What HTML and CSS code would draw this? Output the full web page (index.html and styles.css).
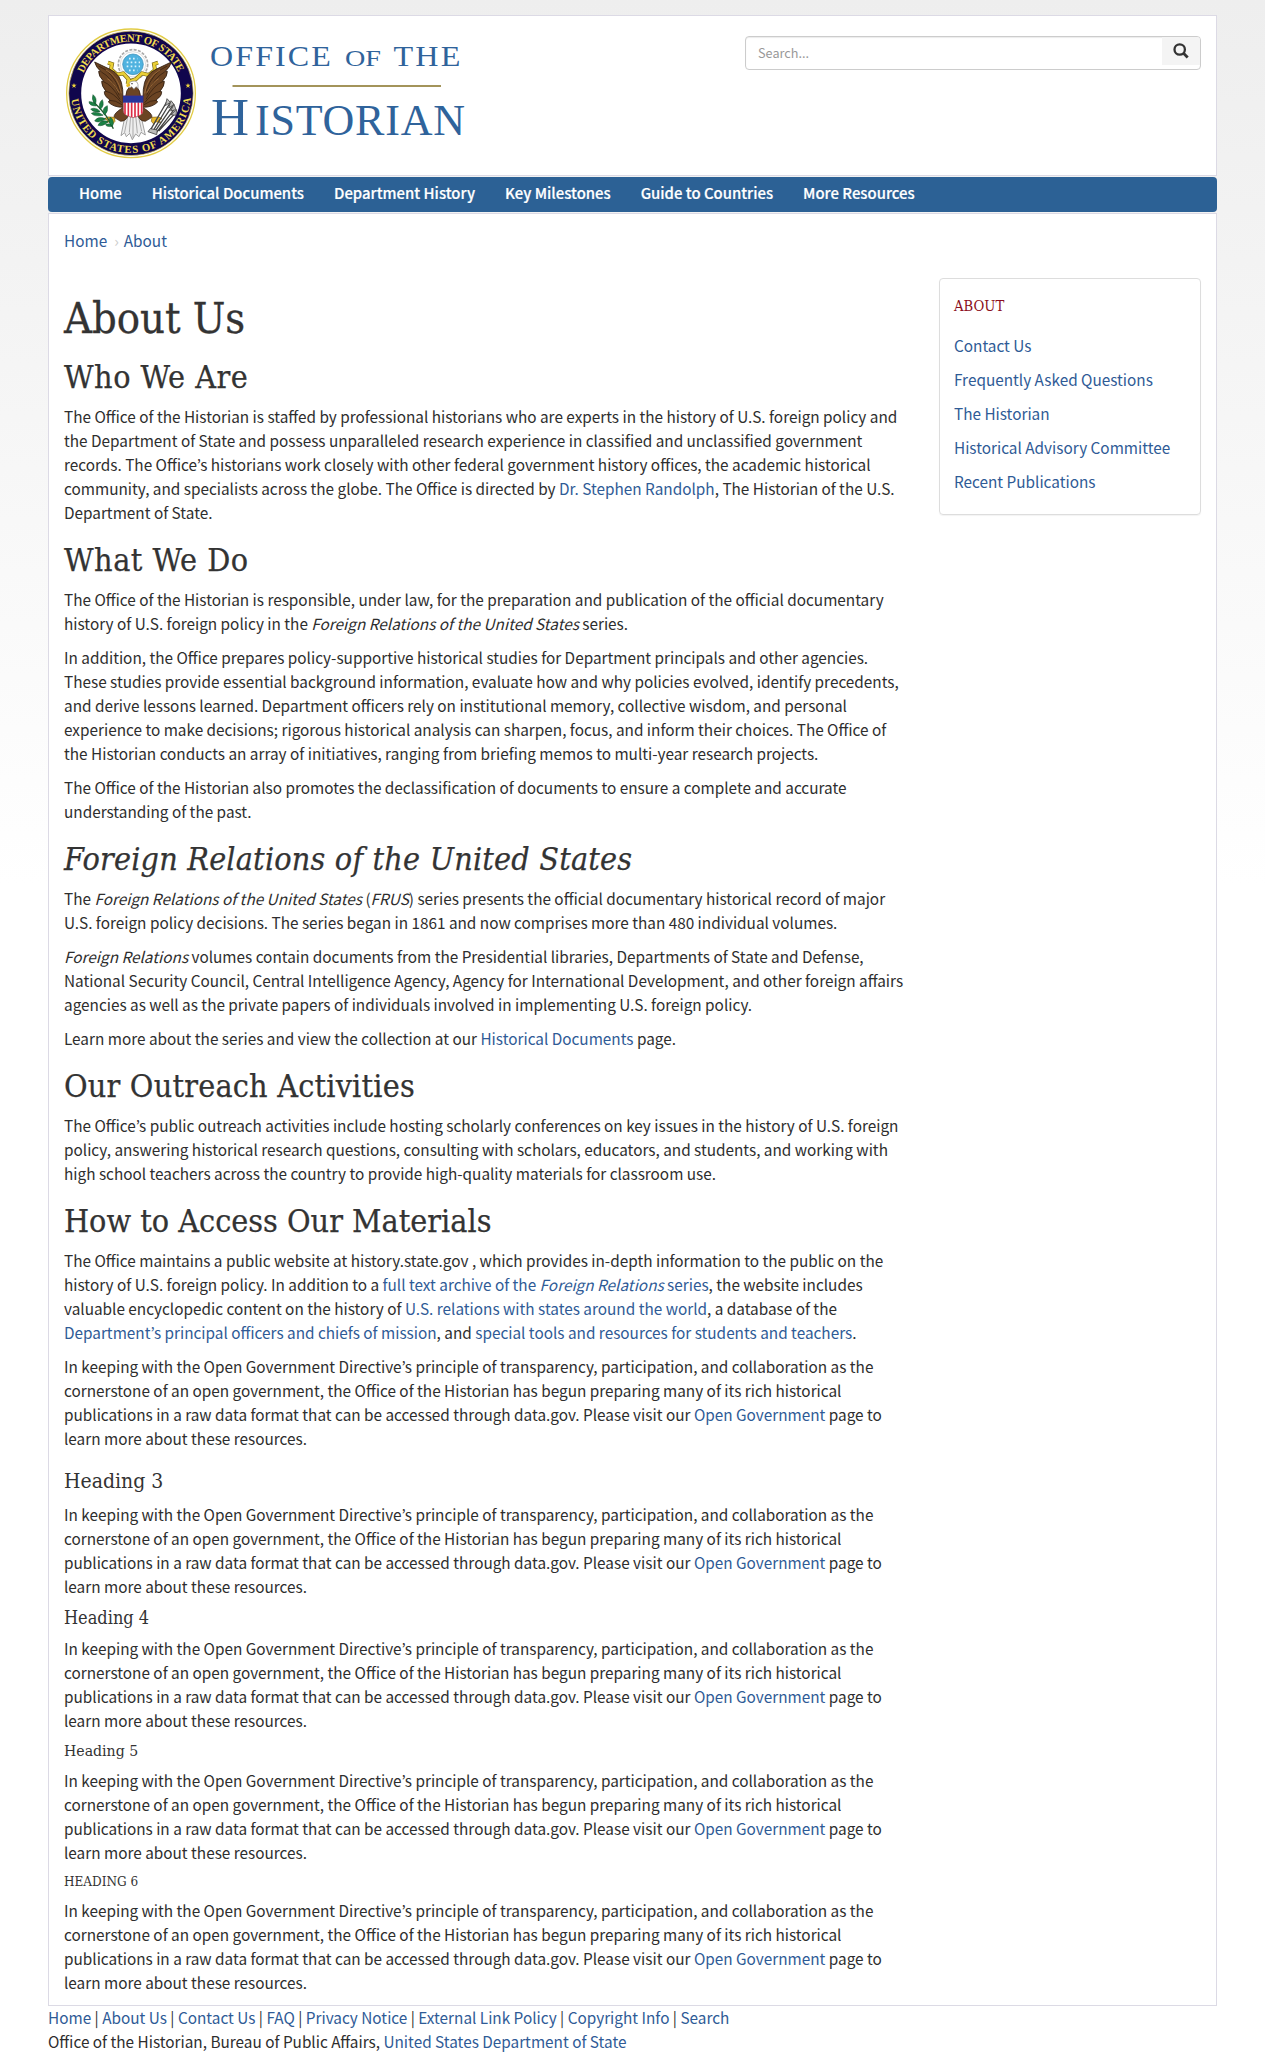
FILE: index.html
```html
<!DOCTYPE html>
<html lang="en">
<head>
<meta charset="utf-8">
<title>About Us - Office of the Historian</title>
<link rel="stylesheet" href="styles.css">
</head>
<body>
<div class="page">
  <header class="masthead">
    <a class="brand" href="#" aria-label="Office of the Historian">
      <svg class="logo" viewBox="60 20 410 145" width="410" height="145">
        <defs>
          <path id="arc-top" d="M70 160A155 155 0 0 1 356 160"/>
          <path id="arc-bottom" d="M34 238A180 180 0 0 0 392 238"/>
          <g id="wing">
            <path d="M104 126L150 148Q184 162 188 208L190 262Q160 262 145 246L150 240Q132 228 133 215L138 214Q124 198 125 184L131 184Q115 168 116 154L122 154Q108 142 104 126Z" fill="#6b4423" stroke="#2d1b0d" stroke-width="2.5"/>
            <path d="M116 138Q160 156 180 214M124 156Q156 172 178 226M130 185Q156 194 180 238M138 214Q160 218 184 248M148 241Q166 240 186 254" fill="none" stroke="#2d1b0d" stroke-width="2"/>
            <path d="M138 150Q176 170 184 220M142 176Q160 186 177 218" fill="none" stroke="#a2703c" stroke-width="2.5"/>
          </g>
          <polygon id="star" points="0,-8 2,-2.500 8,-2.500 3,1 5,7 0,3.500 -5,7 -3,1 -8,-2.500 -2,-2.500"/>
        </defs>
        <g transform="translate(60 20) scale(.33333)">
          <circle cx="213" cy="220" r="193" fill="#fff" stroke="#e2cc45" stroke-width="4"/>
          <circle cx="213" cy="220" r="168" fill="#fff" stroke="#10064d" stroke-width="37"/>
          <circle cx="213" cy="220" r="187" fill="none" stroke="#d9c766" stroke-width="2"/>
          <text class="seal-text"><textPath href="#arc-top" textLength="361">DEPARTMENT OF STATE</textPath></text>
          <text class="seal-text"><textPath href="#arc-bottom" textLength="532">UNITED STATES OF AMERICA</textPath></text>
          <use href="#star" x="42" y="197" fill="#ecd23b"/>
          <use href="#star" x="384" y="197" fill="#ecd23b"/>
          <circle cx="219" cy="133" r="44" fill="#fff" stroke="#aaa" stroke-width="5" stroke-dasharray="9 4"/>
          <circle cx="219" cy="133" r="38" fill="none" stroke="#ccc" stroke-width="2"/>
          <circle cx="219" cy="133" r="31" fill="#4fb2df" stroke="#3489b4" stroke-width="2"/>
          <path d="M207 116h25M200 127h40M200 139h40M207 151h25" stroke="#d9f4ff" stroke-width="5" stroke-dasharray="5 7"/>
          <path d="M144 128l12 4-3 16 18 16 19-4 16 18-3 14M294 128l-12 4 3 18-19 15-20-5-18 17-20 8" fill="none" stroke="#756312" stroke-width="12"/>
          <path d="M144 128l12 4-3 16 18 16 19-4 16 18-3 14M294 128l-12 4 3 18-19 15-20-5-18 17-20 8" fill="none" stroke="#e9cf36" stroke-width="8"/>
          <use href="#wing"/>
          <use href="#wing" transform="translate(438 0) scale(-1 1)"/>
          <path d="M196 284L183 347L194 338L199 350L209 340L217 359L227 342L237 350L243 337L256 345L242 284Z" fill="#eee" stroke="#777" stroke-width="2"/>
          <path d="M204 286l-10 50M212 286l-4 52M219 286v67M227 286l5 54M235 286l10 48" stroke="#888" stroke-width="2"/>
          <path d="M190 262Q160 280 162 292L182 304Q200 304 207 281M248 262Q278 280 276 292L256 304Q238 304 231 281" fill="#6b4423" stroke="#2d1b0d" stroke-width="2"/>
          <path d="M197 229Q198 210 210 199L229 199Q240 210 242 229Z" fill="#6b4423" stroke="#2d1b0d" stroke-width="2"/>
          <path d="M208 204Q202 187 216 184Q237 178 234 205L228 200L222 208L215 200Z" fill="#fff" stroke="#888" stroke-width="2"/>
          <path d="M209 190l-11 4 3 8 10-5z" fill="#e6b91e"/><circle cx="216" cy="191" r="2"/>
          <path d="M190 228h59v45q0 14-30 20q-29-6-29-20z" fill="#fff" stroke="#963b49" stroke-width="2"/>
          <path d="M195 247v36M205 247v41M215 247v44M225 247v44M235 247v41M245 247v34" stroke="#dd2b45" stroke-width="5"/>
          <path d="M189 227h61v21h-61z" fill="#28349b"/>
          <path d="M163 292l-20-1-10 5 10 4-7 8 16-3 5 8 8-9zM276 292l20-1 10 5-10 4 7 8-16-3-5 8-8-9z" fill="#e8b92a" stroke="#84600d" stroke-width="2"/>
          <path d="M160 326Q143 285 101 246" fill="none" stroke="#245c32" stroke-width="4"/>
          <g fill="#1b8145" stroke="#124c2a" stroke-width="1.500">
            <path d="M104 250q-11-11-5-26 13 10 8 27zM109 258q-22 0-22-13 15-1 23 11zM119 267q-4-19 8-28 8 17-6 29zM120 275q-21 3-28-8 16-7 28 7zM132 284q-8-20 10-27 4 17-8 28zM129 286q-26 5-35-6 16-9 35 5zM137 297q-19 14-33 6 9-16 33-7zM145 305q-17 16-31 11 8-18 31-12zM155 318q-13-13-4-27 15 12 6 28zM156 319q-18 3-19-6 12-5 20 5z"/>
          </g>
          <path d="M278 335L330 249M283 337L338 257M289 338L343 268M272 329L320 246M296 333L345 280" stroke="#444" stroke-width="4"/>
          <path d="M316 257l5-21 10 11zM326 264l7-22 9 11zM332 273l10-20 6 16zM333 284l17-15-2 17zM271 326l-7 9 26 9 2-14z" fill="#bbb" stroke="#444" stroke-width="2.500"/>
        </g>
        <g class="wordmark">
          <text x="210" y="65.500" font-size="30" textLength="123" lengthAdjust="spacingAndGlyphs" letter-spacing="2">OFFICE</text>
          <text x="345" y="65.500" font-size="24" textLength="36" lengthAdjust="spacingAndGlyphs">OF</text>
          <text x="393.500" y="65.500" font-size="30" textLength="69" lengthAdjust="spacingAndGlyphs" letter-spacing="2">THE</text>
          <text x="211" y="134.500" font-size="52" textLength="38" lengthAdjust="spacingAndGlyphs">H</text>
          <text x="255" y="134.500" font-size="44" textLength="210">ISTORIAN</text>
        </g>
        <path d="M232.500 86H441" stroke="#a3945a" stroke-width="2"/>
      </svg>
    </a>
    <form class="search">
      <input class="search-input" type="text" placeholder="Search...">
      <button class="search-button" type="button" aria-label="Search">
        <svg width="16" height="16" viewBox="0 0 16 16"><circle cx="6.700" cy="6.500" r="5.200" fill="none" stroke="#333" stroke-width="2.300"/><path d="M10.500 10.300l4.200 4.200" stroke="#333" stroke-width="2.800"/></svg>
      </button>
    </form>
  </header>
  <nav class="navbar">
    <a href="#">Home</a>
    <a href="#">Historical Documents</a>
    <a href="#">Department History</a>
    <a href="#">Key Milestones</a>
    <a href="#">Guide to Countries</a>
    <a href="#">More Resources</a>
  </nav>
  <div class="content">
    <div class="breadcrumb"><a href="#">Home</a><span class="sep">›</span><a href="#">About</a></div>
    <div class="columns">
      <main class="article">
        <h1>About Us</h1>
        <h2 class="spaced">Who We Are</h2>
        <p>The Office of the Historian is staffed by professional historians who are experts in the history of U.S. foreign policy and<br>the Department of State and possess unparalleled research experience in classified and unclassified government<br>records. The Office’s historians work closely with other federal government history offices, the academic historical<br>community, and specialists across the globe. The Office is directed by <a href="#">Dr. Stephen Randolph</a>, The Historian of the U.S.<br>Department of State.</p>
        <h2 class="spaced">What We Do</h2>
        <p>The Office of the Historian is responsible, under law, for the preparation and publication of the official documentary<br>history of U.S. foreign policy in the <em>Foreign Relations of the United States</em> series.</p>
        <p>In addition, the Office prepares policy-supportive historical studies for Department principals and other agencies.<br>These studies provide essential background information, evaluate how and why policies evolved, identify precedents,<br>and derive lessons learned. Department officers rely on institutional memory, collective wisdom, and personal<br>experience to make decisions; rigorous historical analysis can sharpen, focus, and inform their choices. The Office of<br>the Historian conducts an array of initiatives, ranging from briefing memos to multi-year research projects.</p>
        <p>The Office of the Historian also promotes the declassification of documents to ensure a complete and accurate<br>understanding of the past.</p>
        <h2><em>Foreign Relations of the United States</em></h2>
        <p>The <em>Foreign Relations of the United States</em> (<em>FRUS</em>) series presents the official documentary historical record of major<br>U.S. foreign policy decisions. The series began in 1861 and now comprises more than 480 individual volumes.</p>
        <p><em>Foreign Relations</em> volumes contain documents from the Presidential libraries, Departments of State and Defense,<br>National Security Council, Central Intelligence Agency, Agency for International Development, and other foreign affairs<br>agencies as well as the private papers of individuals involved in implementing U.S. foreign policy.</p>
        <p>Learn more about the series and view the collection at our <a href="#">Historical Documents</a> page.</p>
        <h2>Our Outreach Activities</h2>
        <p>The Office’s public outreach activities include hosting scholarly conferences on key issues in the history of U.S. foreign<br>policy, answering historical research questions, consulting with scholars, educators, and students, and working with<br>high school teachers across the country to provide high-quality materials for classroom use.</p>
        <h2 class="tight">How to Access Our Materials</h2>
        <p>The Office maintains a public website at history.state.gov , which provides in-depth information to the public on the<br>history of U.S. foreign policy. In addition to a <a href="#">full text archive of the <em>Foreign Relations</em> series</a>, the website includes<br>valuable encyclopedic content on the history of <a href="#">U.S. relations with states around the world</a>, a database of the<br><a href="#">Department’s principal officers and chiefs of mission</a>, and <a href="#">special tools and resources for students and teachers</a>.</p>
        <p>In keeping with the Open Government Directive’s principle of transparency, participation, and collaboration as the<br>cornerstone of an open government, the Office of the Historian has begun preparing many of its rich historical<br>publications in a raw data format that can be accessed through data.gov. Please visit our <a href="#">Open Government</a> page to<br>learn more about these resources.</p>
        <h3>Heading 3</h3>
        <p>In keeping with the Open Government Directive’s principle of transparency, participation, and collaboration as the<br>cornerstone of an open government, the Office of the Historian has begun preparing many of its rich historical<br>publications in a raw data format that can be accessed through data.gov. Please visit our <a href="#">Open Government</a> page to<br>learn more about these resources.</p>
        <h4>Heading 4</h4>
        <p>In keeping with the Open Government Directive’s principle of transparency, participation, and collaboration as the<br>cornerstone of an open government, the Office of the Historian has begun preparing many of its rich historical<br>publications in a raw data format that can be accessed through data.gov. Please visit our <a href="#">Open Government</a> page to<br>learn more about these resources.</p>
        <h5>Heading 5</h5>
        <p>In keeping with the Open Government Directive’s principle of transparency, participation, and collaboration as the<br>cornerstone of an open government, the Office of the Historian has begun preparing many of its rich historical<br>publications in a raw data format that can be accessed through data.gov. Please visit our <a href="#">Open Government</a> page to<br>learn more about these resources.</p>
        <h6>Heading 6</h6>
        <p>In keeping with the Open Government Directive’s principle of transparency, participation, and collaboration as the<br>cornerstone of an open government, the Office of the Historian has begun preparing many of its rich historical<br>publications in a raw data format that can be accessed through data.gov. Please visit our <a href="#">Open Government</a> page to<br>learn more about these resources.</p>
      </main>
      <aside class="panel">
        <h2 class="panel-title">About</h2>
        <ul>
          <li><a href="#">Contact Us</a></li>
          <li><a href="#">Frequently Asked Questions</a></li>
          <li><a href="#">The Historian</a></li>
          <li><a href="#">Historical Advisory Committee</a></li>
          <li><a href="#">Recent Publications</a></li>
        </ul>
      </aside>
    </div>
  </div>
  <footer class="footer">
    <div><a href="#">Home</a> | <a href="#">About Us</a> | <a href="#">Contact Us</a> | <a href="#">FAQ</a> | <a href="#">Privacy Notice</a> | <a href="#">External Link Policy</a> | <a href="#">Copyright Info</a> | <a href="#">Search</a></div>
    <div>Office of the Historian, Bureau of Public Affairs, <a href="#">United States Department of State</a></div>
  </footer>
</div>
</body>
</html>
```
FILE: styles.css
```css
* { box-sizing: border-box; }
body {
  margin: 0;
  height: 2069px;
  overflow: hidden;
  background: #fff linear-gradient(#eee, #fff) no-repeat 0 0 / 100% 885px;
  color: #2e2e2e;
  font: 15.33px/24px "Noto Sans CJK KR", "Noto Sans", sans-serif;
}
a { color: #2f5b96; text-decoration: none; }
.page { width: 1169px; margin: 0 0 0 48px; padding-top: 15px; }

.masthead {
  display: flex;
  justify-content: space-between;
  align-items: flex-start;
  height: 161px;
  padding: 4px 15px 0 11px;
  border: 1px solid #dcdae5;
  background: #fff;
}
.logo { display: block; }
.wordmark { fill: #2f639b; font-family: "Liberation Serif", serif; }
.seal-text { fill: #f0dc50; font: bold 32px "Liberation Serif", serif; }

.search {
  display: flex;
  width: 456px;
  height: 34px;
  margin-top: 16px;
  border: 1px solid #ccc;
  border-radius: 4px;
  background: #fff;
  box-shadow: inset 0 1px 1px rgba(0, 0, 0, .08);
}
.search-input {
  flex: 1;
  min-width: 0;
  padding: 0 12px 1px;
  border: 0;
  background: transparent;
  font: 12.7px "Noto Sans CJK KR", "Noto Sans", sans-serif;
}
.search-input::placeholder { color: #999; opacity: 1; }
.search-button {
  display: flex;
  align-items: center;
  justify-content: center;
  width: 38px;
  height: 28px;
  padding: 0;
  border: 0;
  border-radius: 0 3px 0 0;
  background: #f4f4f4;
}

.navbar {
  display: flex;
  gap: 30px;
  height: 35px;
  margin: 1px 0;
  padding: 4px 30px 0 31px;
  border-radius: 4px;
  background: #2c6195;
  font-size: 14.9px;
  font-weight: 500;
  -webkit-text-stroke: .2px #fff;
}
.navbar a { color: #fff; white-space: nowrap; }

.content {
  height: 1793px;
  padding: 14px 15px 0;
  border: 1px solid #dcdae5;
  background: #fff;
}
.breadcrumb { height: 24px; }
.sep { padding: 0 5px 0 7px; color: #ccc; }
.columns { display: flex; justify-content: space-between; align-items: flex-start; padding-top: 26px; }
.article { padding-top: 16px; white-space: nowrap; }
.article p { margin: 0 0 10px; }
h1, h2, h3, h4, h5, h6 {
  margin: 0;
  color: #333;
  font-family: "DejaVu Serif Condensed", "DejaVu Serif", serif;
  font-stretch: condensed;
  font-weight: 400;
}
.article h1 { height: 65px; font-size: 43px; line-height: 48px; -webkit-text-stroke: .3px; }
.article h2 { height: 53px; padding-top: 8px; font-size: 32px; line-height: 36px; letter-spacing: .2px; -webkit-text-stroke: .25px; }
.article h2.spaced { letter-spacing: .5px; }
.article h2.tight { letter-spacing: 0; }
.article h1 + h2 { height: 45px; padding-top: 0; }
.article h3 { height: 42px; padding-top: 9px; font-size: 21px; line-height: 24px; }
.article h4 { height: 28px; font-size: 18px; line-height: 19px; }
.article h5 { height: 26px; font-size: 15.7px; line-height: 17px; }
.article h6 { height: 24px; font-size: 13.4px; line-height: 16px; text-transform: uppercase; }

.panel {
  width: 262px;
  height: 237px;
  padding: 15px 14px;
  border: 1px solid #ddd;
  border-radius: 4px;
  box-shadow: 0 1px 1px rgba(0, 0, 0, .05);
}
.panel-title { height: 39px; color: #8b0e20; font-size: 14.7px; line-height: 24px; text-transform: uppercase; }
.panel ul { margin: 0; padding: 0; list-style: none; }
.panel li { height: 34px; white-space: nowrap; }
.footer { margin-top: -1px; white-space: nowrap; }
```
